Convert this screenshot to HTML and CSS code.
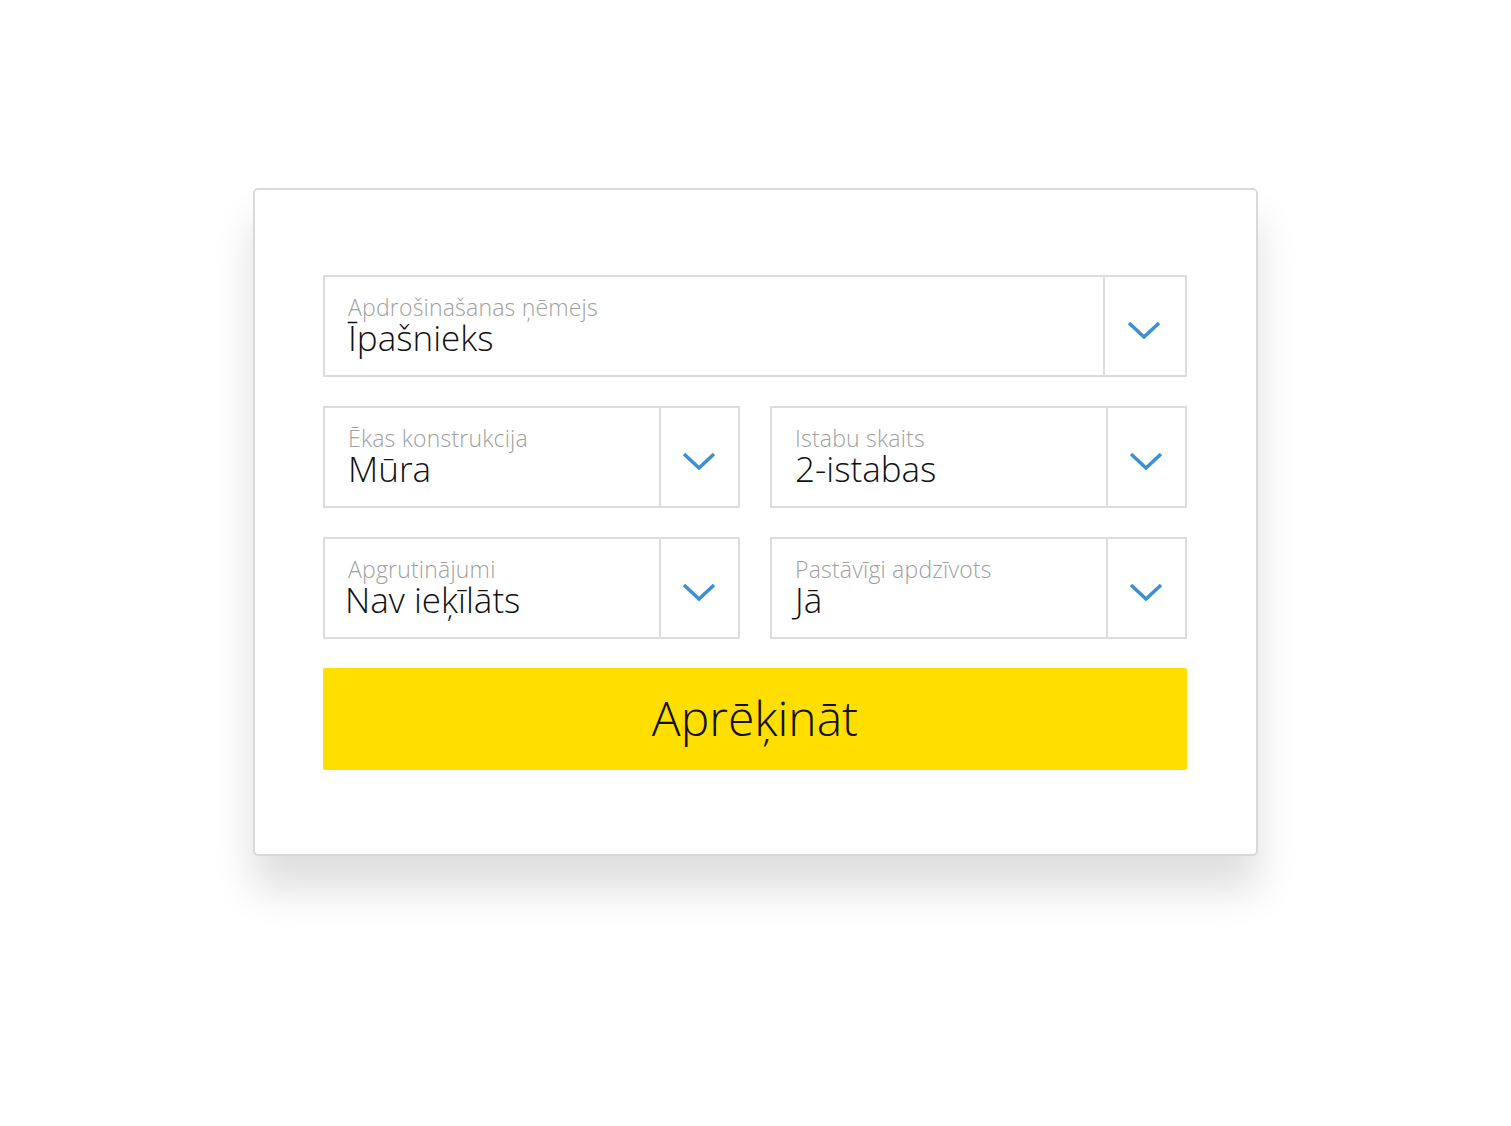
FILE: index.html
```html
<!DOCTYPE html>
<html lang="lv">
<head>
  <meta charset="UTF-8" />
  <meta name="viewport" content="width=device-width, initial-scale=1" />
  <title>Apdrošināšanas kalkulators</title>
  <link rel="stylesheet" href="styles.css">
</head>
<body>
  <div class="calc-card">
    <div class="field field-wide">
      <div class="field-text">
        <span class="field-label">Apdrošinašanas ņēmejs</span>
        <span class="field-value">Īpašnieks</span>
      </div>
      <div class="field-arrow">
        <svg width="34" height="18" viewBox="0 0 34 18"><polyline points="2,2 17,16 32,2" /></svg>
      </div>
    </div>

    <div class="field">
      <div class="field-text">
        <span class="field-label">Ēkas konstrukcija</span>
        <span class="field-value">Mūra</span>
      </div>
      <div class="field-arrow">
        <svg width="34" height="18" viewBox="0 0 34 18"><polyline points="2,2 17,16 32,2" /></svg>
      </div>
    </div>

    <div class="field">
      <div class="field-text">
        <span class="field-label">Istabu skaits</span>
        <span class="field-value">2-istabas</span>
      </div>
      <div class="field-arrow">
        <svg width="34" height="18" viewBox="0 0 34 18"><polyline points="2,2 17,16 32,2" /></svg>
      </div>
    </div>

    <div class="field">
      <div class="field-text">
        <span class="field-label">Apgrutinājumi</span>
        <span class="field-value shift">Nav ieķīlāts</span>
      </div>
      <div class="field-arrow">
        <svg width="34" height="18" viewBox="0 0 34 18"><polyline points="2,2 17,16 32,2" /></svg>
      </div>
    </div>

    <div class="field">
      <div class="field-text">
        <span class="field-label">Pastāvīgi apdzīvots</span>
        <span class="field-value">Jā</span>
      </div>
      <div class="field-arrow">
        <svg width="34" height="18" viewBox="0 0 34 18"><polyline points="2,2 17,16 32,2" /></svg>
      </div>
    </div>

    <button class="calc-btn">Aprēķināt</button>
  </div>
</body>
</html>
```

FILE: styles.css
```css
html, body {
  margin: 0;
  background: #fff;
}
body {
  min-height: 100vh;
  padding-top: 188px;
  box-sizing: border-box;
  font-family: 'Open Sans', 'Noto Sans', sans-serif;
  font-weight: 300;
  color: #111;
}
.calc-card {
  width: 1005px;
  box-sizing: border-box;
  margin: 0 auto;
  padding: 85px 69px 84px 68px;
  border: 2px solid #d9d9d9;
  border-radius: 5px;
  background: #fff;
  box-shadow: 0 34px 40px rgba(0, 0, 0, 0.13);
  display: grid;
  grid-template-columns: 1fr 1fr;
  column-gap: 30px;
  row-gap: 29px;
}
.field {
  display: flex;
  height: 102px;
  box-sizing: border-box;
  border: 2px solid #dcdcdc;
}
.field-wide {
  grid-column: 1 / 3;
}
.field-text {
  flex: 1;
  display: flex;
  flex-direction: column;
  padding: 18px 0 0 23px;
}
.field-label {
  font-size: 23px;
  line-height: 24px;
  color: #a0a0a0;
  letter-spacing: 0.2px;
}
.field-value {
  font-size: 35px;
  line-height: 38px;
  color: #111;
}
.field-value.shift {
  margin-left: -3px;
}
.field-arrow {
  width: 79px;
  border-left: 2px solid #dcdcdc;
  display: flex;
  align-items: center;
  justify-content: center;
  padding: 8px 2px 0 0;
  box-sizing: border-box;
}
.field-wide .field-arrow {
  width: 82px;
}
.field-arrow polyline {
  fill: none;
  stroke: #3b8fd3;
  stroke-width: 3.5;
}
.calc-btn {
  grid-column: 1 / 3;
  height: 102px;
  border: none;
  border-radius: 2px;
  background: #ffde00;
  font-family: inherit;
  font-weight: 300;
  font-size: 48px;
  color: #111;
  padding-bottom: 4px;
  cursor: pointer;
}
```
